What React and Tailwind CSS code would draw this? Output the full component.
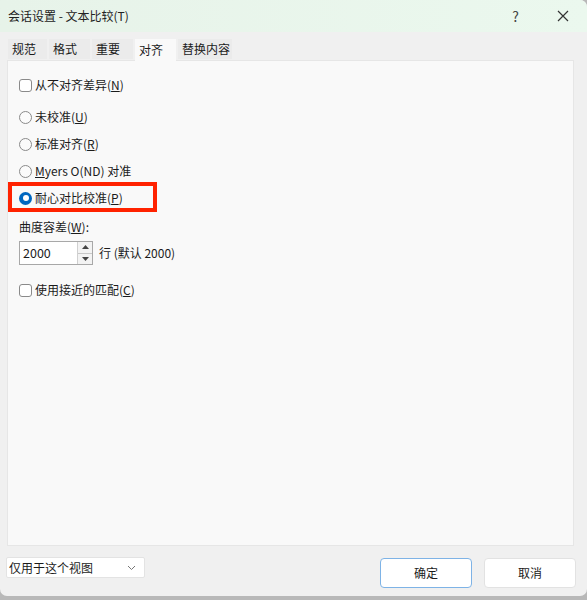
import React from 'react';

const font = { fontFamily: '"Noto Sans CJK SC", "Noto Sans", sans-serif' };

function Checkbox({ label }) {
  return (
    <div className="flex items-center h-4 gap-[3px]">
      <span className="w-[13px] h-[13px] rounded-[3px] border border-[#8a8a8a] bg-white shrink-0"></span>
      <span>{label}</span>
    </div>
  );
}

function Radio({ label, checked }) {
  return (
    <div className="flex items-center h-4 gap-[3px]">
      {checked ? (
        <span className="w-[13px] h-[13px] rounded-full bg-[#0067c0] flex items-center justify-center shrink-0">
          <span className="w-[6px] h-[6px] rounded-full bg-white"></span>
        </span>
      ) : (
        <span className="w-[13px] h-[13px] rounded-full border border-[#8a8a8a] bg-[#fbfbfb] shrink-0"></span>
      )}
      <span>{label}</span>
    </div>
  );
}

export default function App() {
  const tabs = [
    { name: '规范', w: 'w-[39px]' },
    { name: '格式', w: 'w-[41px]' },
    { name: '重要', w: 'w-[41px]' },
    { name: '对齐', w: 'w-[41px]', active: true },
    { name: '替换内容', w: 'w-[54px]' },
  ];

  return (
    <div className="w-[587px] h-[600px] bg-[#b8b8b8] overflow-hidden text-[12px] text-[#1b1b1b]" style={font}>
      <div className="h-[596px] bg-[#f0f0f0] rounded-tr-[7px] rounded-b-[7px] flex flex-col">
        {/* title bar */}
        <div className="h-[32px] bg-gradient-to-r from-[#e7f3e9] to-[#ebf8ee] rounded-tr-[7px] flex items-center pl-[8px] shrink-0">
          <span className="text-[12px] text-[#222]">会话设置 - 文本比较(T)</span>
          <span className="ml-auto mr-[38px] text-[14px] text-[#444]">?</span>
          <svg width="12" height="12" viewBox="0 0 12 12" className="mr-[18px]">
            <path d="M1 1 L11 11 M11 1 L1 11" stroke="#333" strokeWidth="1.2" fill="none" />
          </svg>
        </div>

        {/* tabs */}
        <div className="flex items-end pl-[8px] gap-[2px] h-[28px] shrink-0">
          {tabs.map((t) =>
            t.active ? (
              <div key={t.name} className={`${t.w} h-[22px] bg-[#f9f9f9] pl-[4px] pt-[2px] -mb-px relative z-10`}>
                {t.name}
              </div>
            ) : (
              <div key={t.name} className={`${t.w} h-[20px] bg-[#ebebeb] pl-[4px] pt-px mb-[1px]`}>
                {t.name}
              </div>
            )
          )}
        </div>

        {/* panel */}
        <div className="mx-[7px] mr-[13px] h-[486px] bg-[#f9f9f9] border border-[#e6e6e6] pl-[11px] pt-[16px] flex flex-col shrink-0">
          <Checkbox label={<>从不对齐差异(<u>N</u>)</>} />
          <div className="mt-[16px] flex flex-col gap-[11px]">
            <Radio label={<>未校准(<u>U</u>)</>} />
            <Radio label={<>标准对齐(<u>R</u>)</>} />
            <Radio label={<><u>M</u>yers O(ND) 对准</>} />
            <div className="relative">
              <Radio checked label={<>耐心对比校准(<u>P</u>)</>} />
              <div className="absolute left-[-11px] top-[-8px] w-[149px] h-[30px] border-4 border-[#ff2200]"></div>
            </div>
          </div>
          <div className="mt-[13px] h-4 flex items-center">曲度容差(<u>W</u>):</div>
          <div className="mt-[6px] flex items-center">
            <div className="flex h-[24px] border border-[#a8a8a8] bg-white">
              <div className="w-[57px] pl-[3px] flex items-center text-[12.5px]">2000</div>
              <div className="w-[15px] flex flex-col border-l border-[#d0d0d0] bg-[#f3f3f3]">
                <div className="flex-1 flex items-center justify-center border-b border-[#c8c8c8]">
                  <svg width="7" height="4" viewBox="0 0 7 4"><path d="M0 4 L3.5 0 L7 4 Z" fill="#444" /></svg>
                </div>
                <div className="flex-1 flex items-center justify-center">
                  <svg width="7" height="4" viewBox="0 0 7 4"><path d="M0 0 L3.5 4 L7 0 Z" fill="#444" /></svg>
                </div>
              </div>
            </div>
            <span className="ml-[6px]">行 (默认 2000)</span>
          </div>
          <div className="mt-[17px]">
            <Checkbox label={<>使用接近的匹配(<u>C</u>)</>} />
          </div>
        </div>

        {/* bottom bar */}
        <div className="flex items-start pl-[6px] pr-[11px] pt-[11px]">
          <div className="w-[139px] h-[21px] bg-white border border-[#e3e3e3] rounded-[2px] flex items-center pl-[2px] pr-[8px]">
            <span>仅用于这个视图</span>
            <svg width="9" height="6" viewBox="0 0 9 6" className="ml-auto">
              <path d="M1 1 L4.5 4.5 L8 1" stroke="#777" strokeWidth="1" fill="none" />
            </svg>
          </div>
          <div className="ml-auto mt-[1px] w-[92px] h-[30px] bg-white border border-[#7eb3e6] rounded-[4px] flex items-center justify-center">
            确定
          </div>
          <div className="ml-[12px] mt-[1px] w-[92px] h-[30px] bg-white border border-[#e2e2e2] rounded-[4px] flex items-center justify-center">
            取消
          </div>
        </div>
      </div>
    </div>
  );
}
